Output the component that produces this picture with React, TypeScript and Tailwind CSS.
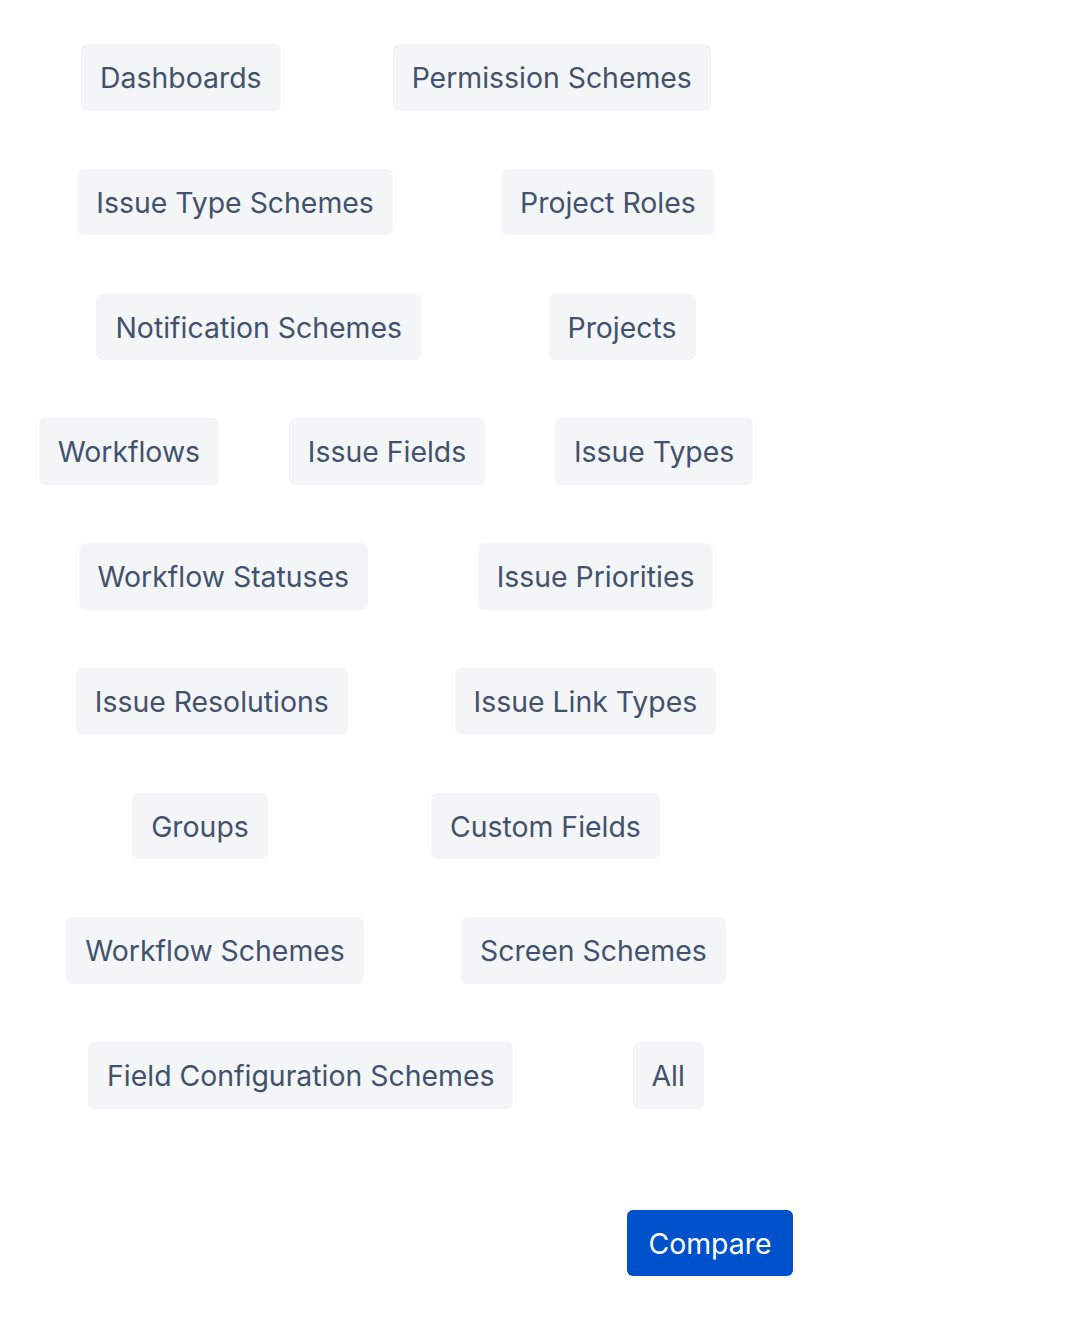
import React from "react";

const rows: string[][] = [
  ["Dashboards", "Permission Schemes"],
  ["Issue Type Schemes", "Project Roles"],
  ["Notification Schemes", "Projects"],
  ["Workflows", "Issue Fields", "Issue Types"],
  ["Workflow Statuses", "Issue Priorities"],
  ["Issue Resolutions", "Issue Link Types"],
  ["Groups", "Custom Fields"],
  ["Workflow Schemes", "Screen Schemes"],
  ["Field Configuration Schemes", "All"],
];

export default function App() {
  return (
    <div
      className="w-[1086px] min-h-[1328px] bg-white overflow-hidden"
      style={{ fontFamily: "Inter, 'Noto Sans', sans-serif" }}
    >
      <div className="pt-[44px] flex flex-col gap-[58.25px] w-[854px] -ml-[31px]">
        {rows.map((row, i) => (
          <div key={i} className="flex justify-evenly">
            {row.map((label) => (
              <button
                key={label}
                className="h-[66.5px] px-[19px] pt-[2px] rounded-[6px] bg-[#f4f5f7] text-[#42526e] text-[28.4px] leading-none whitespace-nowrap"
              >
                {label}
              </button>
            ))}
          </div>
        ))}
      </div>
      <div className="mt-[101.5px] pl-[627px]">
        <button className="h-[66px] w-[166px] pt-[2px] rounded-[6px] bg-[#0052cc] text-white text-[28.4px] leading-none whitespace-nowrap">
          Compare
        </button>
      </div>
    </div>
  );
}
